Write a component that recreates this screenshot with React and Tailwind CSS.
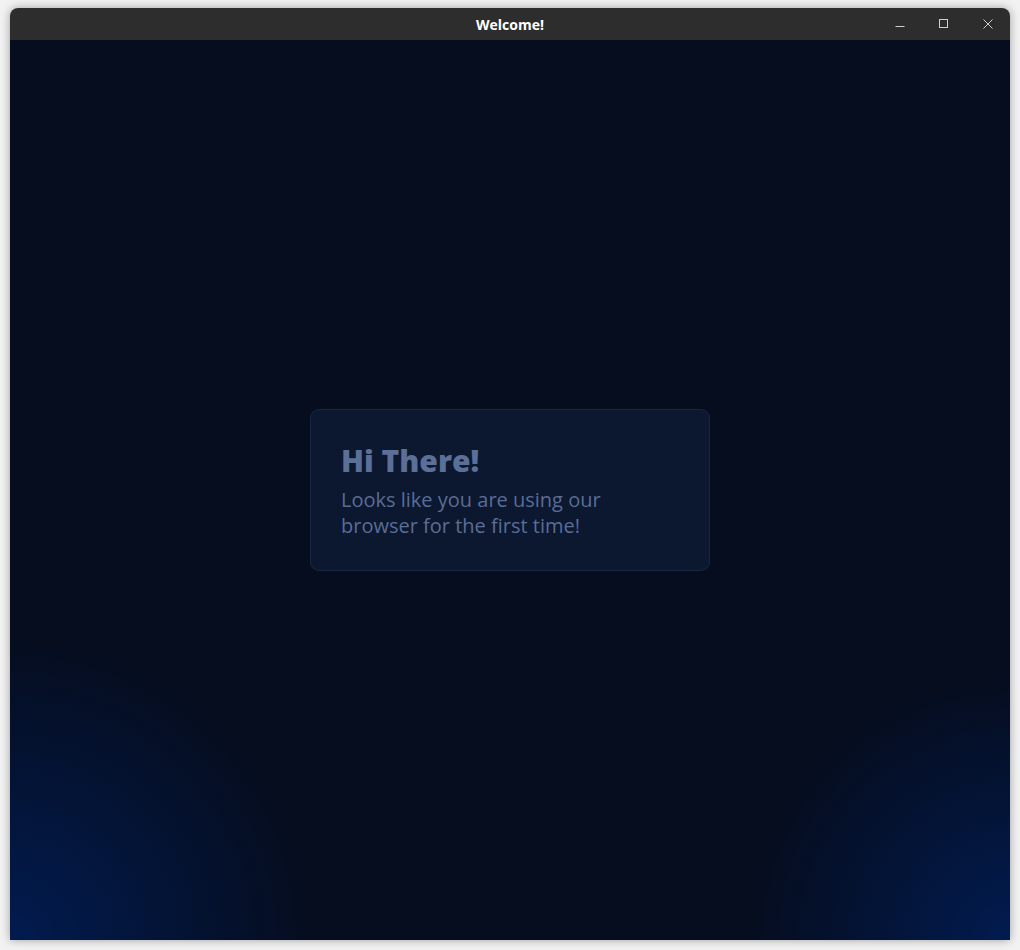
import React from 'react'

const TitleBar = () => {
  return (
    <div className="relative h-8 flex items-center justify-center bg-[#2d2d2d] rounded-t-[8px]">
      <span className="text-white text-[14px] font-bold font-['Open_Sans',sans-serif]">Welcome!</span>
      <div className="absolute right-0 top-0 h-8 flex items-center">
        <button className="w-[44px] h-8 flex items-center justify-center">
          <svg width="10" height="10" viewBox="0 0 10 10">
            <path d="M0.5 7.5h9" stroke="#cfcfcf" strokeWidth="1" />
          </svg>
        </button>
        <button className="w-[44px] h-8 flex items-center justify-center">
          <svg width="10" height="10" viewBox="0 0 10 10">
            <rect x="0.5" y="0.5" width="8" height="8" fill="none" stroke="#cfcfcf" strokeWidth="1" />
          </svg>
        </button>
        <button className="w-[44px] h-8 flex items-center justify-center">
          <svg width="10" height="10" viewBox="0 0 10 10">
            <path d="M0.5 0.5l9 9M9.5 0.5l-9 9" stroke="#cfcfcf" strokeWidth="1" />
          </svg>
        </button>
      </div>
    </div>
  )
}

const App = () => {
  return (
    <div className="w-[1020px] h-[950px] bg-[#f2f2f2] pt-2 px-[10px] font-['Open_Sans',sans-serif]">
      <div className="w-[1000px] h-[932px] flex flex-col rounded-t-[8px] shadow-[0_0_10px_rgba(0,0,0,0.35)]">
        <TitleBar />
        <main className="flex-1 flex items-center justify-center bg-[#050d1f] bg-[radial-gradient(circle_at_0%_100%,rgba(0,32,96,0.75)_0px,rgba(5,13,31,0)_300px),radial-gradient(circle_at_100%_100%,rgba(0,32,96,0.75)_0px,rgba(5,13,31,0)_260px)]">
          <div className="w-[400px] h-[162px] rounded-[9px] border border-[#1a2540] bg-[#0c1730] px-[30px] pt-[33px]">
            <h1 className="text-[30px] leading-[36px] font-extrabold text-[#5b6f97]">Hi There!</h1>
            <p className="mt-[8px] text-[20px] leading-[26px] text-[#5a6d94]">
              Looks like you are using our browser for the first time!
            </p>
          </div>
        </main>
      </div>
    </div>
  )
}

export default App
